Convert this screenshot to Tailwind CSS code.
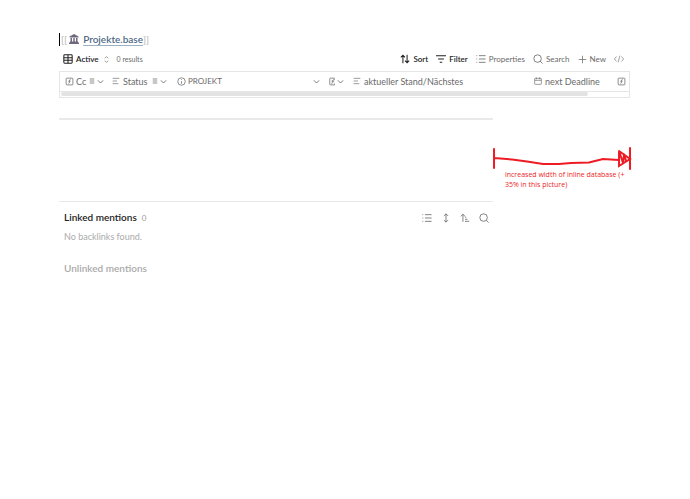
<!DOCTYPE html>
<html lang="en">
  <head>
    <meta charset="UTF-8" />
    <meta name="viewport" content="width=device-width, initial-scale=1" />
    <title>Projekte.base</title>
    <script src="https://cdn.jsdelivr.net/npm/@tailwindcss/browser@4"></script>
  </head>
  <body class="bg-white font-[Lato,sans-serif] text-[9px] text-[#6a6a6a]">
    <!-- Icons shared by the toolbar and the column headers -->
    <svg class="hidden" aria-hidden="true">
      <symbol id="formula" viewBox="0 0 24 24"><rect x="3" y="3" width="18" height="18" rx="2" /><path d="M9 17c2 0 2.8-1 2.8-2.8V10c0-2 1-3.3 3.2-3M9 11.2h5.7" /></symbol>
      <symbol id="list" viewBox="0 0 24 24"><path d="M7 4h16M7 12h16M7 20h16M1 4h2M1 12h2M1 20h2" /></symbol>
      <symbol id="lines" viewBox="0 0 24 24"><path d="M2 4h20M2 12h13M2 20h17" /></symbol>
      <symbol id="menu" viewBox="0 0 24 24"><path d="M3 4h18M3 12h18M3 20h18" /></symbol>
      <symbol id="chevron" viewBox="0 0 24 24"><path d="m3 8 9 9 9-9" /></symbol>
      <symbol id="search" viewBox="0 0 24 24"><circle cx="11" cy="11" r="9" /><path d="m23 23-5.600-5.600" /></symbol>
    </svg>

    <main class="pt-[31px] pl-[59px] pr-[60px]">
      <div class="flex h-4 items-center text-[10px]">
        <span class="mr-px h-[13px] w-px bg-black"></span>
        <span class="text-[#b5b5b5]">[[</span>
        <svg class="mr-[4px] ml-[2px] size-[10px]" viewBox="0 0 20 20" fill="#70687c">
          <path d="M10 0 1 5v2h18V5zM3 8h3v7H3zm5.500 0h3v7h-3zM14 8h3v7h-3zM2 15h16v2H2zM0 17h20v3H0z" />
        </svg>
        <a href="#" class="font-semibold text-[#4f6a86] underline decoration-[#9db0c2] underline-offset-2">Projekte.base</a>
        <span class="text-[#b5b5b5]">]]</span>
      </div>

      <div class="flex h-6 items-center text-[8px]">
        <button class="ml-1 flex items-center gap-[3px] font-semibold text-[#222]">
          <svg class="size-[10px]" viewBox="0 0 24 24" fill="none" stroke="currentColor" stroke-width="2.500"><rect x="2" y="2" width="20" height="20" rx="2" /><path d="M2 9h20M2 15h20M12 2v20" /></svg>
          Active
          <svg class="ml-px size-[7px] text-[#777]" viewBox="0 0 24 24" fill="none" stroke="currentColor" stroke-width="2.500"><path d="m6 8 6-6 6 6M6 16l6 6 6-6" /></svg>
        </button>
        <span class="ml-[7px] text-[7px]">0 results</span>
        <div class="mr-[6px] ml-auto flex items-center gap-2">
          <button class="flex items-center gap-[3px] font-semibold text-[#222]">
            <svg class="size-[10px]" viewBox="0 0 24 24" fill="none" stroke="currentColor" stroke-width="2.500"><path d="M7 22V3M2 8l5-5 5 5M17 2v19M12 16l5 5 5-5" /></svg>
            Sort
          </button>
          <button class="flex items-center gap-[3px] font-semibold text-[#222]">
            <svg class="size-[10px]" viewBox="0 0 24 24" fill="none" stroke="currentColor" stroke-width="2.500"><path d="M0 4h24M5 12h14M9 20h6" /></svg>
            Filter
          </button>
          <button class="flex items-center gap-[3px]">
            <svg class="size-[10px]" fill="none" stroke="currentColor" stroke-width="2"><use href="#list" /></svg>
            Properties
          </button>
          <button class="flex items-center gap-[3px]">
            <svg class="size-[10px]" fill="none" stroke="currentColor" stroke-width="2"><use href="#search" /></svg>
            Search
          </button>
          <button class="flex items-center gap-[3px]">
            <svg class="size-[9px]" viewBox="0 0 24 24" fill="none" stroke="currentColor" stroke-width="2"><path d="M2 12h20M12 2v20" /></svg>
            New
          </button>
          <button aria-label="Embed code">
            <svg class="block size-[10px]" viewBox="0 0 24 24" fill="none" stroke="currentColor" stroke-width="1.500"><path d="m6 6-5 6 5 6M18 6l5 6-5 6M14 4l-4 16" /></svg>
          </button>
        </div>
      </div>

      <div class="overflow-hidden border border-[#e6e6e6]">
        <table class="w-full table-fixed text-left whitespace-nowrap">
          <colgroup>
            <col class="w-[47px]" />
            <col class="w-[65px]" />
            <col class="w-[152px]" />
            <col class="w-[24px]" />
            <col />
            <col class="w-[83px]" />
            <col class="w-[17px]" />
          </colgroup>
          <thead>
            <tr class="h-[19px] border-b border-[#e6e6e6]">
              <th class="p-0 pl-[5px] font-normal">
                <div class="flex items-center">
                  <svg class="mr-[2px] size-[9px] shrink-0" fill="none" stroke="currentColor" stroke-width="2"><use href="#formula" /></svg>
                  Cc
                  <svg class="mr-[2px] ml-auto size-[6px]" fill="none" stroke="currentColor" stroke-width="3"><use href="#menu" /></svg>
                  <svg class="mr-[3px] size-[7px]" fill="none" stroke="currentColor" stroke-width="3"><use href="#chevron" /></svg>
                </div>
              </th>
              <th class="p-0 pl-[5px] font-normal">
                <div class="flex items-center">
                  <svg class="mr-[3px] size-[8px]" fill="none" stroke="currentColor" stroke-width="2"><use href="#lines" /></svg>
                  Status
                  <svg class="mr-[2px] ml-auto size-[6px]" fill="none" stroke="currentColor" stroke-width="3"><use href="#menu" /></svg>
                  <svg class="mr-[5px] size-[7px]" fill="none" stroke="currentColor" stroke-width="3"><use href="#chevron" /></svg>
                </div>
              </th>
              <th class="p-0 pl-[5px] font-normal">
                <div class="flex items-center text-[8px]">
                  <svg class="mr-[2px] size-[9px]" viewBox="0 0 24 24" fill="none" stroke="currentColor" stroke-width="2"><circle cx="12" cy="12" r="10" /><path d="M12 18v-7M12 6v2" /></svg>
                  PROJEKT
                  <svg class="mr-1 ml-auto size-[7px]" fill="none" stroke="currentColor" stroke-width="3"><use href="#chevron" /></svg>
                </div>
              </th>
              <th class="p-0 pl-[5px] font-normal">
                <div class="flex items-center">
                  <svg class="h-[9px] w-[6px]" viewBox="0 0 16 24" fill="none" stroke="currentColor" stroke-width="2"><path d="M15 3H4a2 2 0 0 0-2 2v14a2 2 0 0 0 2 2h11M6 17c3 0 4-1 4-3v-3c0-3 1-4 4-4M7 11h7M15 4v3M15 17v4" /></svg>
                  <svg class="ml-[2px] size-[7px]" fill="none" stroke="currentColor" stroke-width="3"><use href="#chevron" /></svg>
                </div>
              </th>
              <th class="p-0 pl-[5px] font-normal">
                <div class="flex items-center">
                  <svg class="mr-[3px] size-[8px]" fill="none" stroke="currentColor" stroke-width="2"><use href="#lines" /></svg>
                  aktueller Stand/Nächstes
                </div>
              </th>
              <th class="p-0 pl-[5px] font-normal">
                <div class="flex items-center">
                  <svg class="mr-[3px] size-[8px]" viewBox="0 0 24 24" fill="none" stroke="currentColor" stroke-width="2"><rect x="2" y="4" width="20" height="18" rx="2" /><path d="M7 1v6M17 1v6M2 10h20" /></svg>
                  next Deadline
                </div>
              </th>
              <th class="p-0 pl-[5px] font-normal" aria-label="Formula">
                <svg class="size-[9px]" fill="none" stroke="currentColor" stroke-width="2"><use href="#formula" /></svg>
              </th>
            </tr>
          </thead>
        </table>
        <!-- Horizontal scrollbar -->
        <div class="px-px pb-px">
          <div class="h-1 w-[93%] rounded-full bg-[#e3e3e3]"></div>
        </div>
      </div>

      <div class="flex">
        <div class="w-[76%] shrink-0 pt-5">
          <hr class="border-t-2 border-[#e9e9e9]" />
          <section class="mt-[81px] border-t border-[#e8e8e8] pt-2 pl-[5px]">
            <div class="flex h-4 items-center">
              <h2 class="text-[10px] font-semibold text-[#222]">Linked mentions</h2>
              <span class="ml-[5px] text-[8px] text-[#999]">0</span>
              <div class="mr-1 ml-auto flex gap-[9px]">
                <button aria-label="Collapse results"><svg class="block size-[10px]" fill="none" stroke="currentColor" stroke-width="2"><use href="#list" /></svg></button>
                <button aria-label="Show more context"><svg class="block size-[10px]" viewBox="0 0 24 24" fill="none" stroke="currentColor" stroke-width="2"><path d="M12 2v20M7 7l5-5 5 5M7 17l5 5 5-5" /></svg></button>
                <button aria-label="Change sort order"><svg class="block size-[10px]" viewBox="0 0 24 24" fill="none" stroke="currentColor" stroke-width="2"><path d="M7 21V3M2 8l5-5 5 5M12 10h3M12 15h6M12 20h10" /></svg></button>
                <button aria-label="Show search filter"><svg class="block size-[10px]" fill="none" stroke="currentColor" stroke-width="2"><use href="#search" /></svg></button>
              </div>
            </div>
            <p class="mt-[3px] leading-4 text-[#aaa]">No backlinks found.</p>
            <h2 class="mt-[15px] text-[10px] leading-4 font-semibold text-[#aaa]">Unlinked mentions</h2>
          </section>
        </div>

        <aside class="flex-1 pt-[49px] font-['Open_Sans',sans-serif] text-[7px] text-[#ed1c24]">
          <svg class="block h-[23px] w-full overflow-visible" viewBox="0 0 137 23" fill="none" stroke="currentColor" stroke-width="2" stroke-linecap="round">
            <path d="M1 2v19M1 11l18 1.500 15 2 16 2.500h16l12-1 18-.5 14-3.500 16 1M137 1v21" />
            <path d="m126 4 11 8-11 7V4l4 12 1-9 2 7" />
          </svg>
          <p class="pl-3 leading-[10px]">increased width of inline database (+<br />35% in this picture)</p>
        </aside>
      </div>
    </main>
  </body>
</html>
